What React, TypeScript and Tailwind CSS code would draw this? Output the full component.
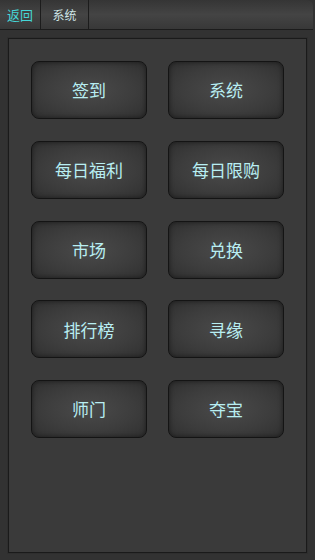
const items = ['签到', '系统', '每日福利', '每日限购', '市场', '兑换', '排行榜', '寻缘', '师门', '夺宝'];

function MenuButton({ label }: { label: string }) {
  return (
    <button
      type="button"
      className="h-[58px] rounded-[8px] border border-[#141414] bg-[radial-gradient(ellipse_at_center,#4a4a4a_0%,#3d3d3d_55%,#303030_100%)] shadow-[inset_0_0_5px_rgba(0,0,0,0.5)] text-[17px] text-[#b8eef2]"
    >
      {label}
    </button>
  );
}

export default function App() {
  return (
    <div
      className="w-[315px] h-[560px] bg-[#323232] flex flex-col overflow-hidden"
      style={{ fontFamily: '"Noto Sans CJK SC", "Noto Sans", sans-serif' }}
    >
      {/* tab bar */}
      <div className="h-[30px] flex bg-[linear-gradient(#353535,#444444_50%,#383838)] border-b border-[#1c1c1c] rounded-tr-[6px] mr-[2px]">
        <div className="w-[41px] flex items-center justify-center border-r border-[#1c1c1c] text-[13px] text-[#45d6d6]">
          返回
        </div>
        <div className="w-[48px] flex items-center justify-center border-r border-[#1c1c1c] text-[12px] text-[#cfe6e6]">
          系统
        </div>
      </div>

      {/* panel */}
      <div className="flex-1 mt-[8px] mx-[8px] mb-[7px] border border-[#1a1a1a] bg-[#3a3a3a] shadow-[0_0_0_1px_#2e2e2e]">
        <div className="grid grid-cols-[116px_116px] justify-between gap-y-[21.75px] px-[22px] pt-[22px]">
          {items.map((it) => (
            <MenuButton key={it} label={it} />
          ))}
        </div>
      </div>
    </div>
  );
}
